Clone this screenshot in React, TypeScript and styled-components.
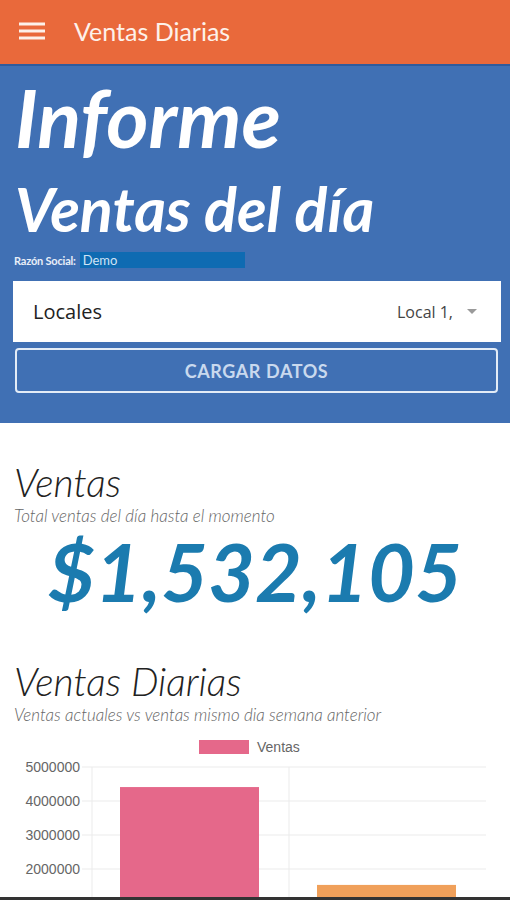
import styled, { createGlobalStyle } from 'styled-components';

const GlobalStyle = createGlobalStyle`
    html, body {
        margin: 0;
        padding: 0;
        background: #ffffff;
        font-family: Lato, 'Open Sans', sans-serif;
    }
    * {
        box-sizing: border-box;
    }
`;

const weekData = [
    { label: 'Hoy', value: 4410000, color: '#e5688a' },
    { label: 'Semana anterior', value: 1532105, color: '#f0a05a' },
];

const ticks = [5000000, 4000000, 3000000, 2000000, 1000000, 0];

const SalesChart = () => {
    const top = 27;
    const step = 34;
    const left = 92;
    const right = 486;
    const zeroY = top + step * 5;
    const scale = (v: number) => zeroY - (v / 1000000) * step;
    const colW = (right - left) / weekData.length;

    return (
        <ChartSvg width='510' height='220' viewBox='0 0 510 220'>
            <rect x='199' y='0' width='50' height='14' fill='#e5688a' />
            <text x='257' y='12' fontSize='14' fill='#666' fontFamily='Liberation Sans, Arial, sans-serif'>
                Ventas
            </text>
            {ticks.map((t, i) => (
                <g key={t}>
                    <line x1={82} x2={right} y1={top + i * step} y2={top + i * step} stroke='#ebebeb' strokeWidth='1' />
                    <text
                        x='80'
                        y={top + i * step + 5}
                        fontSize='14'
                        fill='#666'
                        textAnchor='end'
                        fontFamily='Liberation Sans, Arial, sans-serif'
                    >
                        {t}
                    </text>
                </g>
            ))}
            <line x1={left} x2={left} y1={top} y2={zeroY + 8} stroke='#ebebeb' />
            <line x1={left + colW} x2={left + colW} y1={top} y2={zeroY + 8} stroke='#ebebeb' />
            {weekData.map((d, i) => (
                <rect
                    key={d.label}
                    x={left + i * colW + 28}
                    y={scale(d.value)}
                    width={colW - 58}
                    height={zeroY - scale(d.value)}
                    fill={d.color}
                />
            ))}
        </ChartSvg>
    );
};

const App = () => {
    return (
        <>
            <GlobalStyle />
            <Page>
                <AppBar>
                    <MenuIcon viewBox='0 0 26 18'>
                        <path d='M0 2h26M0 9h26M0 16h26' stroke='#fdf1ea' strokeWidth='3' />
                    </MenuIcon>
                    <AppTitle>Ventas Diarias</AppTitle>
                </AppBar>

                <Hero>
                    <HeroTitle>Informe</HeroTitle>
                    <HeroSubtitle>Ventas del día</HeroSubtitle>
                    <CompanyRow>
                        <CompanyLabel>Razón Social:</CompanyLabel>
                        <CompanyValue>Demo</CompanyValue>
                    </CompanyRow>
                    <SelectBox>
                        <SelectLabel>Locales</SelectLabel>
                        <SelectValue>
                            Local 1,
                            <Caret />
                        </SelectValue>
                    </SelectBox>
                    <LoadButton>CARGAR DATOS</LoadButton>
                </Hero>

                <Section $gap={37}>
                    <SectionTitle>Ventas</SectionTitle>
                    <SectionNote>Total ventas del día hasta el momento</SectionNote>
                    <Amount>$1,532,105</Amount>
                </Section>

                <Section $gap={40}>
                    <SectionTitle>Ventas Diarias</SectionTitle>
                    <SectionNote>Ventas actuales vs ventas mismo dia semana anterior</SectionNote>
                    <SalesChart />
                </Section>
            </Page>
            <BottomEdge />
        </>
    );
};

const Page = styled.div`
    width: 510px;
    height: 900px;
    overflow: hidden;
`;

const AppBar = styled.header`
    height: 66px;
    background: #e9693b;
    display: flex;
    align-items: center;
    padding: 0 0 2px 19px;
    gap: 29px;
    border-bottom: 2px solid #2f5b9c;
`;

const MenuIcon = styled.svg`
    width: 26px;
    height: 18px;
`;

const AppTitle = styled.div`
    color: #fdf1ea;
    font-size: 25px;
    font-family: Lato, sans-serif;
`;

const Hero = styled.section`
    background: #4070b4;
    padding: 6px 9px 30px 13px;
    display: flex;
    flex-direction: column;
`;

const HeroTitle = styled.h1`
    margin: 0 0 0 2px;
    color: #fff;
    font-size: 81px;
    line-height: 90px;
    font-weight: 700;
    font-style: italic;
`;

const HeroSubtitle = styled.h2`
    margin: 14px 0 0 2px;
    color: #fff;
    font-size: 61px;
    line-height: 66px;
    font-weight: 700;
    font-style: italic;
`;

const CompanyRow = styled.div`
    display: flex;
    align-items: center;
    height: 16px;
    margin-top: 10px;
`;

const CompanyLabel = styled.span`
    font-size: 11px;
    color: #e8eef8;
    font-weight: 700;
    padding: 0 4px 0 1px;
    letter-spacing: -0.2px;
`;

const CompanyValue = styled.span`
    background: #0f6bb2;
    color: #cfe3f5;
    width: 165px;
    height: 16px;
    font-size: 13px;
    line-height: 16px;
    padding-left: 3px;
`;

const SelectBox = styled.div`
    margin-top: 13px;
    background: #ffffff;
    height: 61px;
    display: flex;
    align-items: center;
    justify-content: space-between;
    padding: 0 24px 0 20px;
`;

const SelectLabel = styled.span`
    font-family: 'Open Sans', Lato, sans-serif;
    font-size: 20px;
    color: #222;
`;

const SelectValue = styled.span`
    display: flex;
    align-items: center;
    gap: 14px;
    font-family: 'Open Sans', Lato, sans-serif;
    font-size: 16px;
    color: #444;
`;

const Caret = styled.span`
    width: 0;
    height: 0;
    border-left: 5px solid transparent;
    border-right: 5px solid transparent;
    border-top: 5px solid #9a9a9a;
`;

const LoadButton = styled.button`
    margin: 6px 3px 0 2px;
    height: 45px;
    background: transparent;
    border: 2px solid #e3ecf7;
    border-radius: 4px;
    color: #c9d9ee;
    font-family: Lato, sans-serif;
    font-size: 18px;
    font-weight: 700;
    letter-spacing: 0.6px;
`;

const Section = styled.section<{ $gap: number }>`
    padding-top: ${(props) => props.$gap}px;
    display: flex;
    flex-direction: column;
`;

const SectionTitle = styled.h3`
    margin: 0 0 0 14px;
    font-size: 39px;
    line-height: 44px;
    font-weight: 300;
    font-style: italic;
    color: #222;
`;

const SectionNote = styled.div`
    margin: 2px 0 0 14px;
    font-size: 17px;
    line-height: 20px;
    font-style: italic;
    font-weight: 300;
    color: #666;
`;

const Amount = styled.div`
    text-align: center;
    font-size: 81px;
    line-height: 96px;
    font-weight: 700;
    font-style: italic;
    color: #1b7baf;
    margin-top: -3px;
`;

const ChartSvg = styled.svg`
    display: block;
    margin-top: 15px;
`;

const BottomEdge = styled.div`
    position: fixed;
    left: 0;
    right: 0;
    bottom: 0;
    height: 3px;
    background: #333;
`;

export default App;
